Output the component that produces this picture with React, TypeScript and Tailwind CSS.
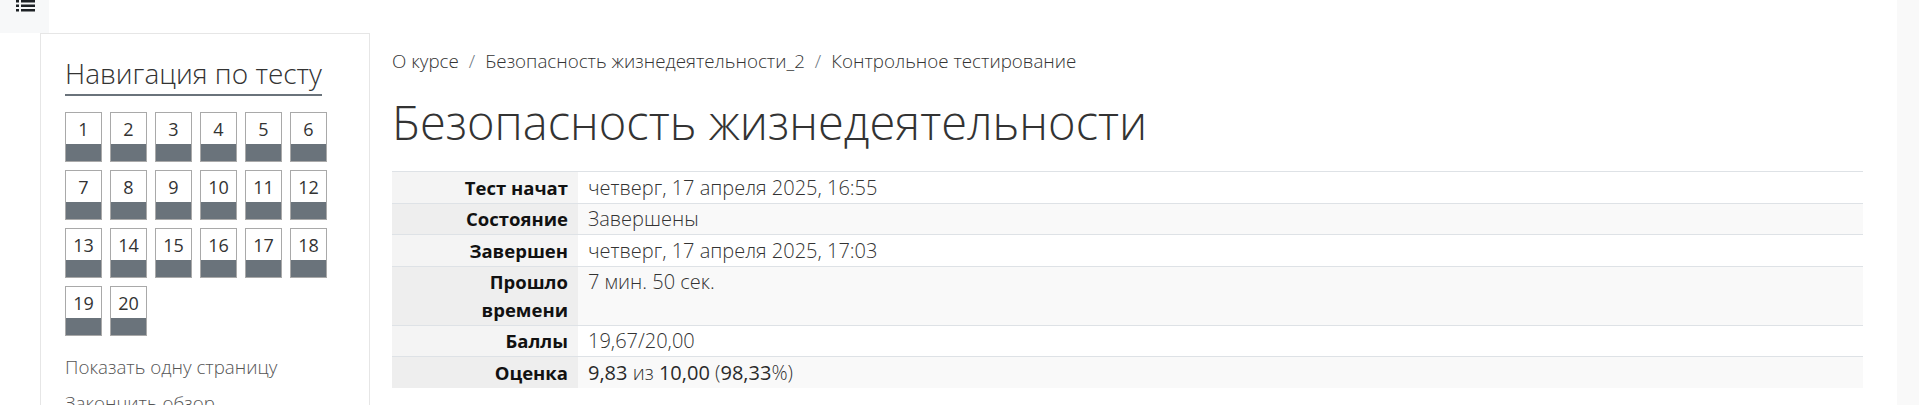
import React from "react";

const rows: { label: string[]; value: React.ReactNode }[] = [
  { label: ["Тест начат"], value: "четверг, 17 апреля 2025, 16:55" },
  { label: ["Состояние"], value: "Завершены" },
  { label: ["Завершен"], value: "четверг, 17 апреля 2025, 17:03" },
  { label: ["Прошло", "времени"], value: "7 мин. 50 сек." },
  { label: ["Баллы"], value: "19,67/20,00" },
  {
    label: ["Оценка"],
    value: (
      <>
        <span className="font-normal text-[#2a2a2a]">9,83</span> из{" "}
        <span className="font-normal text-[#2a2a2a]">10,00</span> (
        <span className="font-normal text-[#2a2a2a]">98,33</span>%)
      </>
    ),
  },
];

function ListIcon() {
  return (
    <svg width="19" height="12" viewBox="0 0 19 12" className="block">
      <rect x="0" y="0" width="3" height="2.5" fill="#1d2125" />
      <rect x="5" y="0" width="14" height="2.5" fill="#1d2125" />
      <rect x="0" y="4.5" width="3" height="2.5" fill="#1d2125" />
      <rect x="5" y="4.5" width="14" height="2.5" fill="#1d2125" />
      <rect x="0" y="9" width="3" height="2.5" fill="#1d2125" />
      <rect x="5" y="9" width="14" height="2.5" fill="#1d2125" />
    </svg>
  );
}

export default function App() {
  const nums = Array.from({ length: 20 }, (_, i) => i + 1);
  return (
    <div
      className="flex w-[1919px] h-[405px] overflow-hidden bg-white text-[#333]"
      style={{ fontFamily: '"Open Sans", "Liberation Sans", sans-serif' }}
    >
      {/* left column */}
      <div className="flex flex-col w-[370px] shrink-0">
        <div className="h-[33px] w-[49px] shrink-0 bg-[#f7f8f9] flex items-start pl-[16px]">
          <ListIcon />
        </div>
        <div className="ml-[40px] flex-1 shrink-0 border-l border-t border-r border-[#e6e6e6] pl-[24px] pt-[18px]">
          <div className="inline-block border-b-2 border-[#6a737b] text-[28px] font-light leading-[42px] text-[#333]">
            Навигация по тесту
          </div>
          <div className="mt-[16px] grid grid-cols-[repeat(6,37px)] gap-x-[8px] gap-y-[8px]">
            {nums.map((n) => (
              <div
                key={n}
                className="flex h-[50px] w-[37px] flex-col border border-[#a9a9a9] bg-white"
              >
                <div className="flex h-[31px] items-center justify-center text-[18px] leading-none text-[#333]">
                  {n}
                </div>
                <div className="flex-1 bg-[#6a737b]" />
              </div>
            ))}
          </div>
          <div className="mt-[13px] text-[18.75px] font-light leading-[36px] text-[#555]">
            Показать одну страницу
          </div>
          <div className="text-[18.75px] font-light leading-[36px] text-[#555]">
            Закончить обзор
          </div>
        </div>
      </div>

      {/* main */}
      <div className="ml-[22px] w-[1471px] shrink-0 pt-[48px]">
        <div className="flex items-center text-[18.75px] font-light leading-[26px] text-[#333]">
          <span>О курсе</span>
          <span className="px-[10px] text-[#6a737b]">/</span>
          <span>Безопасность жизнедеятельности_2</span>
          <span className="px-[10px] text-[#6a737b]">/</span>
          <span>Контрольное тестирование</span>
        </div>
        <h1 className="mt-[20px] text-[47px] font-light leading-[56px] text-[#333]">
          Безопасность жизнедеятельности
        </h1>
        <table className="mt-[21px] w-full border-collapse leading-[27.5px]">
          <tbody>
            {rows.map((r, i) => {
              const even = i % 2 === 1;
              return (
                <tr
                  key={i}
                  className={`border-t border-[#dee2e6] ${even ? "bg-[#f9f9f9]" : "bg-white"}`}
                >
                  <th
                    className={`w-[186px] py-[1.5px] pr-[10px] text-right align-top text-[18.5px] font-bold text-[#111] ${
                      even ? "bg-[#eeeeee]" : "bg-[#f4f4f4]"
                    }`}
                  >
                    {r.label.map((l) => (
                      <div key={l}>{l}</div>
                    ))}
                  </th>
                  <td className="py-[1.5px] pl-[10px] text-left align-top text-[20px] font-light text-[#333]">
                    {r.value}
                  </td>
                </tr>
              );
            })}
          </tbody>
        </table>
      </div>

      <div className="flex-1" />
      <div className="w-[22px] shrink-0 bg-[#f9f9f9]" />
    </div>
  );
}
